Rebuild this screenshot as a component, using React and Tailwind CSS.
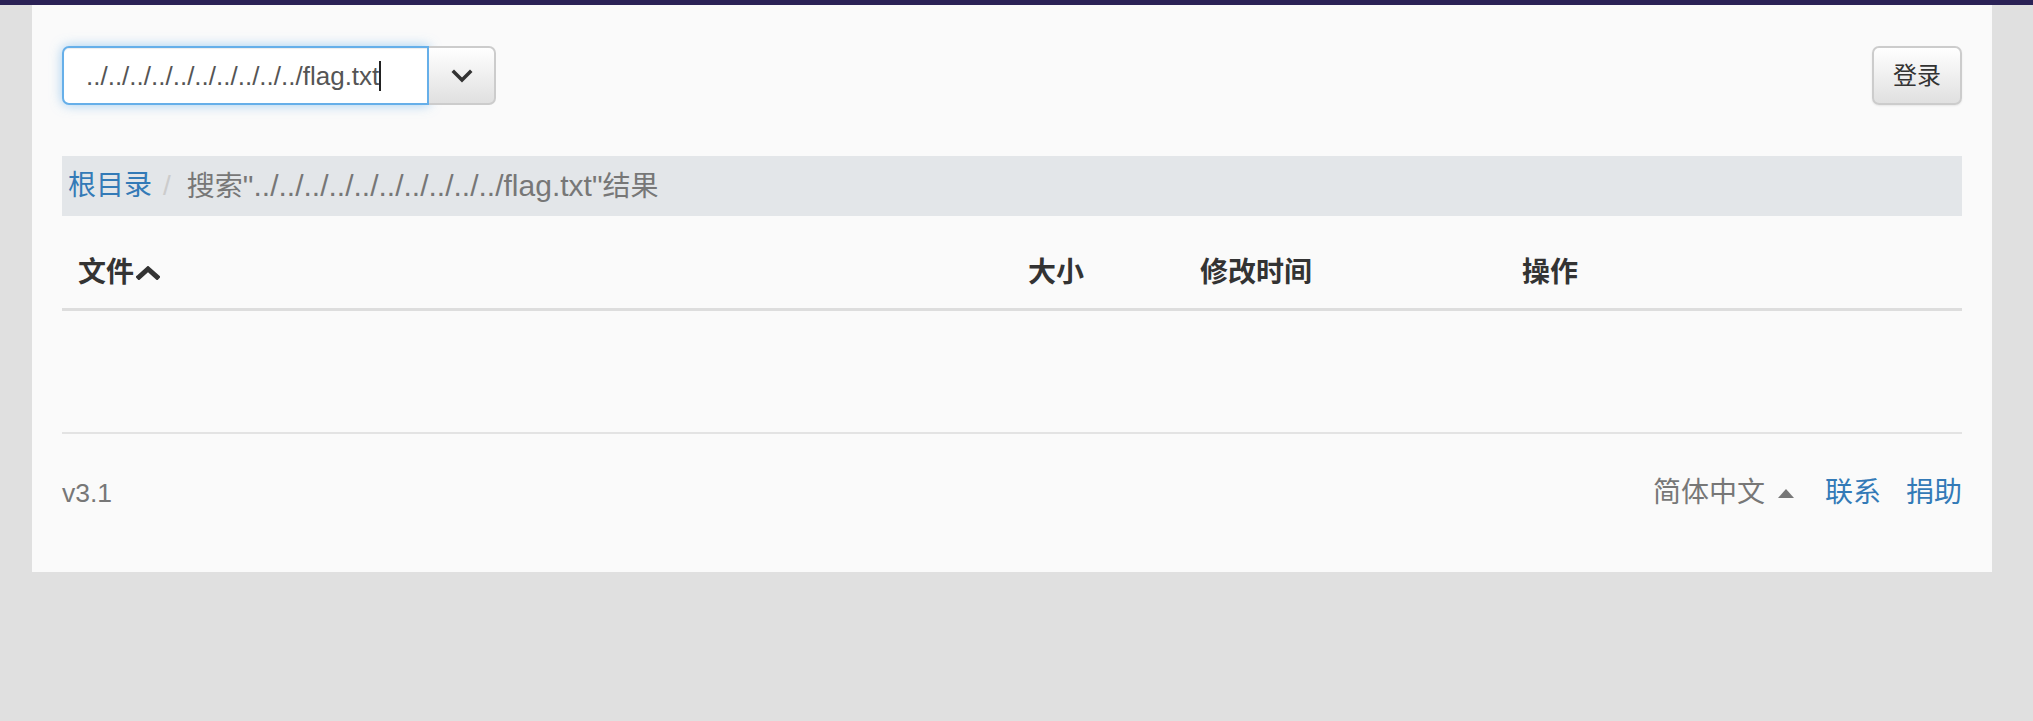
import React from "react";

const FONT = { fontFamily: '"Liberation Sans", "Noto Sans CJK SC", sans-serif' };

function ChevronDown() {
  return (
    <svg width="22" height="14" viewBox="0 0 22 14">
      <polyline points="3,3 11,11 19,3" fill="none" stroke="#333" strokeWidth="3.5" strokeLinecap="square" />
    </svg>
  );
}

function CaretUpBold() {
  return (
    <svg width="24" height="14" viewBox="0 0 24 14" className="ml-[2px]">
      <polyline points="3,11 12,3 21,11" fill="none" stroke="#333" strokeWidth="5" strokeLinecap="square" />
    </svg>
  );
}

export default function App() {
  return (
    <div className="min-h-screen bg-[#e0e0e0]" style={FONT}>
      <div className="h-[5px] bg-[#2b2256]" />
      <div className="ml-[32px] w-[1960px] h-[567px] bg-[#fafafa] px-[30px] pt-[41px]">
        {/* top row */}
        <div className="flex justify-between items-start h-[59px]">
          <div className="flex h-[59px]">
            <div className="w-[367px] h-[59px] bg-white border-2 border-[#66afe9] rounded-l-[7px] shadow-[inset_0_1px_1px_rgba(0,0,0,0.075),0_0_12px_rgba(102,175,233,0.6)] flex items-center pl-[22px] text-[26px] text-[#555] leading-none">
              <span>../../../../../../../../../../flag.txt</span>
              <span className="inline-block w-[1.5px] h-[30px] bg-[#222]" />
            </div>
            <div className="w-[67px] h-[59px] border-2 border-l-0 border-[#ccc] rounded-r-[7px] bg-gradient-to-b from-white to-[#e0e0e0] flex items-center justify-center">
              <ChevronDown />
            </div>
          </div>
          <div className="w-[90px] h-[59px] border-2 border-[#ccc] rounded-[7px] bg-gradient-to-b from-white to-[#e0e0e0] shadow-[0_1px_2px_rgba(0,0,0,0.08)] flex items-center justify-center text-[24px] text-[#333] leading-none">
            登录
          </div>
        </div>

        {/* breadcrumb */}
        <div className="mt-[51px] h-[60px] bg-[#e3e6e9] flex items-center pl-[6px] text-[28px] leading-none">
          <span className="text-[#337ab7]">根目录</span>
          <span className="ml-[11px] text-[#ccc]">/</span>
          <span className="ml-[16px] text-[#777]">
            搜索<span className="text-[30px]">"../../../../../../../../../../flag.txt"</span>结果
          </span>
        </div>

        {/* table header */}
        <div className="mt-[21px] grid grid-cols-[952px_172px_322px_454px] h-[74px] border-b-[3px] border-[#ddd] text-[28px] font-bold text-[#333] leading-none">
          <div className="px-[16px] flex items-center">
            <span>文件</span>
            <CaretUpBold />
          </div>
          <div className="px-[14px] flex items-center">大小</div>
          <div className="px-[14px] flex items-center">修改时间</div>
          <div className="px-[14px] flex items-center">操作</div>
        </div>

        {/* rule */}
        <div className="mt-[121px] h-[2px] bg-[#e3e3e3]" />

        {/* footer */}
        <div className="mt-[39px] h-[40px] flex items-center justify-between text-[28px] leading-none">
          <span className="text-[#777] text-[26.5px]">v3.1</span>
          <div className="flex items-center">
            <span className="text-[#777]">简体中文</span>
            <svg width="16" height="9" viewBox="0 0 16 9" className="ml-[13px]">
              <polygon points="0,9 8,0 16,9" fill="#777" />
            </svg>
            <span className="ml-[31px] text-[#337ab7]">联系</span>
            <span className="ml-[25px] text-[#337ab7]">捐助</span>
          </div>
        </div>
      </div>
    </div>
  );
}
